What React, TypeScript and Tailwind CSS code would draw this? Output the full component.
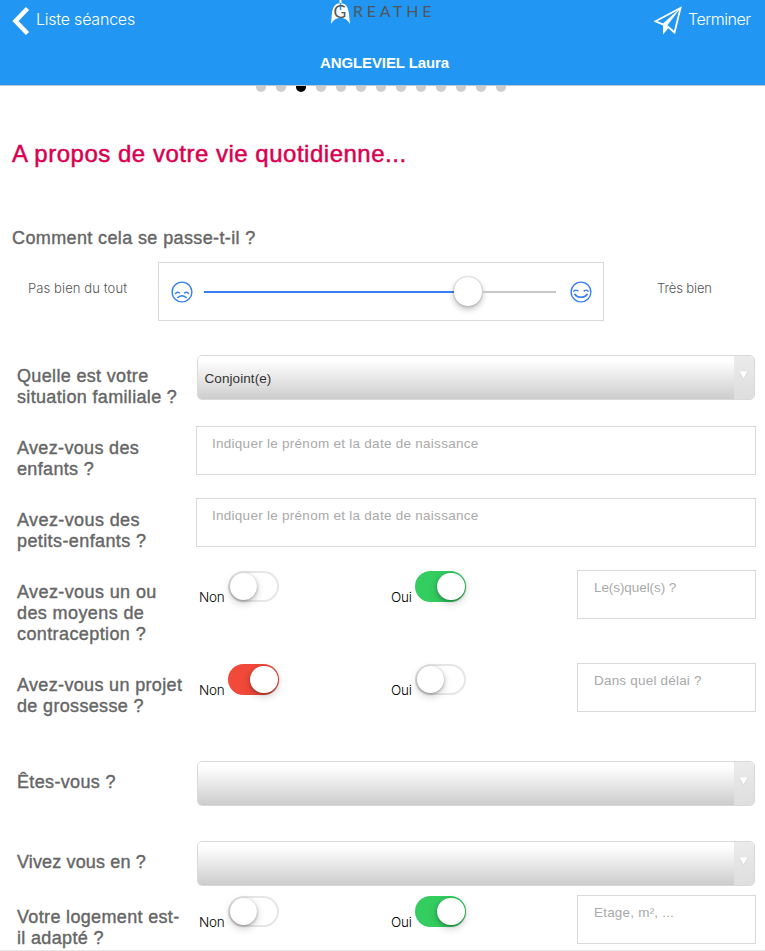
import type { ReactNode } from "react";

function Toggle({ on, color }: { on: boolean; color: string }) {
  return (
    <span
      className={
        "flex h-[31px] w-[51px] items-center rounded-full " +
        (on ? `justify-end px-[1.5px] ${color}` : "justify-start border-2 border-[#e6e6e6] bg-white")
      }
    >
      <span
        className={
          "size-[27.5px] shrink-0 rounded-full bg-white shadow-[0_3px_8px_rgba(0,0,0,0.2),0_1px_3px_rgba(0,0,0,0.3)] " +
          (on ? "" : "-ml-[0.5px]")
        }
      />
    </span>
  );
}

function Row({
  label,
  height,
  tracking = "tracking-[0.34px]",
  select,
  children,
}: {
  label: ReactNode;
  height: string;
  tracking?: string;
  select?: boolean;
  children: ReactNode;
}) {
  return (
    <div className={`flex items-start ${height}`}>
      <div
        className={
          `w-[179px] shrink-0 whitespace-nowrap text-[18px] leading-[21px] text-[#666] [-webkit-text-stroke:0.4px_#666] ${tracking} ` +
          (select ? "pt-[11px]" : "pt-[12px]")
        }
      >
        {label}
      </div>
      {children}
    </div>
  );
}

function Select({ value }: { value?: string }) {
  return (
    <div className="ml-px flex h-[45px] w-[558px] overflow-hidden rounded-[5px] border border-[#d9d9d9]">
      <div className="flex flex-1 items-center bg-linear-to-b from-white from-10% to-[#cdcdcd] pt-[3px] pl-[6.5px] text-[13.5px] tracking-[0.08px] text-[#333]">
        {value}
      </div>
      <div className="flex w-5 justify-center bg-linear-to-b from-[#ebebeb] to-[#dedede] pt-[15px] pr-[2px]">
        <svg width="9" height="9" viewBox="0 0 9 9">
          <path d="M0.500 0.500h8L4.500 8.300z" fill="#fff" />
          <path d="M0.800 1.500L4.500 8.300 8.200 1.500" fill="none" stroke="#c8c8c8" strokeWidth="0.5" />
        </svg>
      </div>
    </div>
  );
}

function Field({ text, size }: { text: string; size: string }) {
  return (
    <div className={`h-[49px] border border-[#d9d9d9] bg-white pt-2 leading-[18px] text-[#a9a9a9] ${size}`}>
      {text}
    </div>
  );
}

function YesNo({ no, placeholder, size }: { no: boolean; placeholder: string; size: string }) {
  return (
    <>
      <div className="flex w-[192px] pt-px pl-[3px]">
        <span className="w-[29px] pt-[17px] font-['Inter',sans-serif] text-[13.5px] leading-[18px] font-light tracking-[-0.2px] text-black">Non</span>
        <Toggle on={no} color="bg-[#f1493a]" />
      </div>
      <div className="flex w-[189px] pt-px pl-[3px]">
        <span className="w-[24px] pt-[17px] font-['Inter',sans-serif] text-[13.5px] leading-[18px] font-light tracking-[-0.2px] text-black">Oui</span>
        <Toggle on={!no} color="bg-[#34cd60]" />
      </div>
      <Field text={placeholder} size={size} />
    </>
  );
}

function Face({ happy }: { happy?: boolean }) {
  return (
    <svg className="shrink-0" width="22" height="22" viewBox="0 0 22 22" fill="none" stroke="#387ef5" strokeWidth="1.4" strokeLinecap="round">
      <circle cx="11" cy="11" r="9.900" />
      {happy ? (
        <>
          <path d="M3.800 10.200Q5.500 8.200 7.900 9.900M14.100 9.900Q16.500 8.200 18.200 10.200" />
          <path d="M4.800 13.300Q6.800 16.300 11 16.300T17.200 13.300" strokeWidth="1.600" />
        </>
      ) : (
        <>
          <path d="M4.500 12.600Q5.800 10.300 8.500 11.800M17.500 12.600Q16.200 10.300 13.500 11.800" />
          <path d="M6.800 16.500Q11 13 15.200 16.500" strokeWidth="1.600" />
        </>
      )}
    </svg>
  );
}

export default function App() {
  return (
    <div className="h-[951px] w-[765px] overflow-hidden border-b border-[#e8e8e8] bg-white font-['Liberation_Sans',Arial,sans-serif]">
      <header className="h-[86px] border-b border-[#b9c5d0] bg-[#2196f3] text-white">
        <div className="flex h-[42px] items-start">
          <div className="flex w-[331px] items-center pt-[6px] pl-3">
            <svg width="18" height="30" viewBox="0 0 18 30" fill="none" stroke="#fff" strokeWidth="4.500">
              <path d="M15.500 2.500L3.500 15 15.500 27.500" />
            </svg>
            <span className="-mt-[5px] ml-[6px] font-['Inter',sans-serif] text-[16px] leading-5 font-light tracking-[-0.22px]">Liste séances</span>
          </div>
          <div className="flex w-[323px] items-start">
            <svg width="19" height="24" viewBox="0 0 19 24">
              <path d="M8.500 0V3.500C4 2.500 1.500 8 0.800 14L0 24Q3.500 17.800 9.500 17.800T19 24L18 14C17.300 8 15 2.500 10.500 3.500V0z" fill="#fff" />
              <path d="M9.500 3V10" stroke="#2196f3" strokeWidth="1.500" />
              <text x="2.500" y="17.500" fontFamily="Lato" fontSize="17.500" fill="#555">G</text>
            </svg>
            <span className="ml-[3px] font-['Lato',sans-serif] text-[16px] leading-[22px] font-normal tracking-[3.7px] text-[#50565c]">REATHE</span>
          </div>
          <div className="flex items-center pt-[6px]">
            <svg width="28" height="29" viewBox="0 0 28 29">
              <path d="M1.500 15.300L26.500 2 20.500 26.500 13.800 20.500z" fill="none" stroke="#fff" strokeWidth="1.800" />
              <path d="M1 15.300L9 18.500V28.500L14.500 22 12.500 20.500 26.500 2 9 17.500z" fill="#fff" />
            </svg>
            <span className="-mt-[4px] ml-[6px] font-['Inter',sans-serif] text-[16px] leading-5 font-light tracking-[-0.45px]">Terminer</span>
          </div>
        </div>
        <div className="pt-[11px] pl-1 text-center text-[15px] leading-5 font-bold tracking-[-0.1px]">ANGLEVIEL Laura</div>
      </header>
      <div className="flex h-[6px] items-end gap-[10px] overflow-hidden pl-[256px]">
        {Array.from({ length: 13 }, (_, i) => (
          <span key={i} className={"size-[10px] shrink-0 rounded-full " + (i === 2 ? "bg-black" : "bg-[#ccc]")} />
        ))}
      </div>
      <h1 className="pt-[47px] pl-3 text-[24px] leading-[30px] tracking-[0.51px] whitespace-nowrap text-[#d9004f] [-webkit-text-stroke:0.5px_#d9004f]">
        A propos de votre vie quotidienne...
      </h1>
      <h2 className="mt-[59px] pl-3 text-[18px] leading-5 tracking-[0.38px] whitespace-nowrap text-[#666] [-webkit-text-stroke:0.4px_#666]">
        Comment cela se passe-t-il ?
      </h2>
      <div className="mt-[14px] flex h-[93px] items-start">
        <span className="w-[158px] pt-[16px] pl-7 font-['Inter',sans-serif] text-[13px] leading-5 font-light tracking-[0.1px] text-[#555]">Pas bien du tout</span>
        <div className="flex h-[59px] w-[446px] items-center border border-[#d9d9d9] px-[11.5px]">
          <Face />
          <div className="mr-[14px] ml-[11.5px] flex flex-1 items-center">
            <div className="h-[2px] w-[249.5px] bg-[#387ef5]" />
            <div className="size-[28.5px] shrink-0 rounded-full bg-white shadow-[0_0_2px_rgba(0,0,0,0.35),0_3px_6px_rgba(0,0,0,0.28)]" />
            <div className="h-[2px] flex-1 bg-[#c8c8c8]" />
          </div>
          <Face happy />
        </div>
        <span className="pt-[16px] pl-[53px] font-['Inter',sans-serif] text-[13px] leading-5 font-light tracking-[-0.12px] text-[#555]">Très bien</span>
      </div>
      <div className="pl-[17px]">
        <Row select height="h-[71px]" label={<>Quelle est votre<br />situation familiale ?</>}>
          <Select value="Conjoint(e)" />
        </Row>
        <Row height="h-[72px]" label={<>Avez-vous des<br />enfants ?</>}>
          <Field text="Indiquer le prénom et la date de naissance" size="w-[560px] pl-[15px] text-[13.5px] tracking-[0.27px]" />
        </Row>
        <Row height="h-[72px]" tracking="tracking-[0.4px]" label={<>Avez-vous des<br />petits-enfants ?</>}>
          <Field text="Indiquer le prénom et la date de naissance" size="w-[560px] pl-[15px] text-[13.5px] tracking-[0.27px]" />
        </Row>
        <Row height="h-[93px]" tracking="tracking-[0.4px]" label={<>Avez-vous un ou<br />des moyens de<br />contraception ?</>}>
          <YesNo no={false} placeholder="Le(s)quel(s) ?" size="w-[179px] pl-4 text-[13.5px] tracking-[-0.08px]" />
        </Row>
        <Row height="h-[98px]" label={<>Avez-vous un projet<br />de grossesse ?</>}>
          <YesNo no placeholder="Dans quel délai ?" size="w-[179px] pl-4 text-[13.5px] tracking-[0.2px]" />
        </Row>
        <Row select height="h-[80px]" label="Êtes-vous ?">
          <Select />
        </Row>
        <Row select height="h-[54px]" tracking="tracking-[0.14px]" label="Vivez vous en ?">
          <Select />
        </Row>
        <Row height="h-[55px]" label={<>Votre logement est-<br />il adapté ?</>}>
          <YesNo no={false} placeholder="Etage, m², ..." size="w-[179px] pl-4 text-[13.5px] tracking-[0.2px]" />
        </Row>
      </div>
    </div>
  );
}
